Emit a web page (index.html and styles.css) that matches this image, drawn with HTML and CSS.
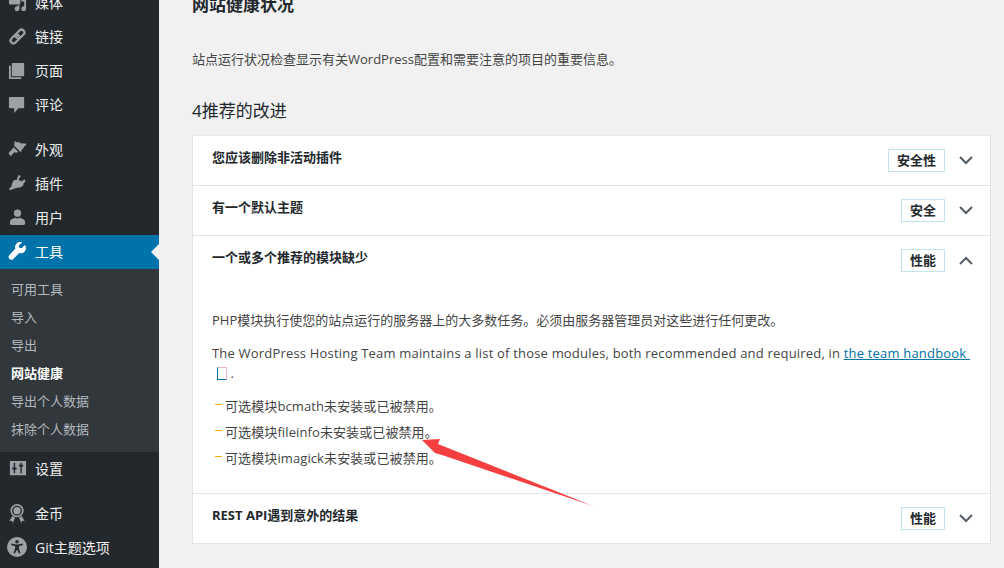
FILE: index.html

```html
<!DOCTYPE html>
<html lang="zh-CN">
<head>
    <meta charset="UTF-8">
    <title>网站健康状况</title>
    <link rel="stylesheet" href="styles.css">
</head>
<body>
    <div class="page">
        <!-- Admin menu -->
        <aside class="sidebar">
            <ul class="menu">
                <li class="menu-item"><svg class="menu-icon" viewBox="0 0 20 20"><path d="M13 11V4c0-.55-.45-1-1-1h-1.670L9 1H5L3.670 3H2c-.55 0-1 .45-1 1v7c0 .55.45 1 1 1h10c.55 0 1-.45 1-1zM14 6h5v10.500c0 1.380-1.120 2.500-2.500 2.500S14 17.880 14 16.500s1.120-2.500 2.500-2.500c.17 0 .34.020.5.050V9h-3V6zm-4 8.050V13h2v3.500c0 1.380-1.120 2.500-2.500 2.500S7 17.880 7 16.500 8.120 14 9.500 14c.17 0 .34.020.5.050z"/></svg>媒体</li>
                <li class="menu-item"><svg class="menu-icon menu-icon-line" viewBox="0 0 20 20"><rect x="1" y="7" width="10.500" height="6" rx="3" transform="rotate(-45 10 10)"/><rect x="8.500" y="7" width="10.500" height="6" rx="3" transform="rotate(-45 10 10)"/></svg>链接</li>
                <li class="menu-item"><svg class="menu-icon" viewBox="0 0 20 20"><path d="M4 2h13v14H4zM1 5h2v12h11v2H1z"/></svg>页面</li>
                <li class="menu-item"><svg class="menu-icon" viewBox="0 0 20 20"><path d="M2 2h14a1 1 0 0 1 1 1v10a1 1 0 0 1-1 1h-5l-4.500 5V14H2a1 1 0 0 1-1-1V3a1 1 0 0 1 1-1z"/></svg>评论</li>
                <li class="menu-sep"></li>
                <li class="menu-item"><svg class="menu-icon" viewBox="0 0 20 20"><path d="M7 1l3 1.500 2-.500 1 1.500L20 4l-3 3-1 2-1 .5-1.500 3.500-7-7zM6 7.500l5 5-2.500 1-2-.5-3.500 4-2.500-3 4-4.500z"/></svg>外观</li>
                <li class="menu-item"><svg class="menu-icon" viewBox="0 0 20 20"><path d="M11 1l2.500 1-2.500 4 3.500 2 2.700-2.500 1.300 2-2.500 3 .5 1-3 2.500-3.500.5-2 .5L2 17l-1-1.500 2.500-2 .5-2.500 1.500-4 2.500-1 1 .5z"/></svg>插件</li>
                <li class="menu-item"><svg class="menu-icon" viewBox="0 0 20 20"><circle cx="10" cy="5.500" r="3.800"/><path d="M2 17v-2.500C2 12.500 5 11 7.500 10.200c1.500 1 3.500 1 5 0C15 11 18 12.500 18 14.500V17c-2 1.300-14 1.300-16 0z"/></svg>用户</li>
                <li class="menu-item menu-item-active"><svg class="menu-icon" viewBox="0 0 20 20"><path d="M17.800 3.100l-3.500 3.400-2.400-.5-.5-2.400 3.400-3.400c-2-.7-4.300-.2-5.800 1.300-1.500 1.500-1.900 3.600-1.300 5.500L1.500 13.700c-1.200 1.200-1.200 3 0 4.100 1.200 1.200 3 1.200 4.100 0l6.200-6.200c1.900.7 4 .2 5.500-1.300 1.500-1.500 2-3.700 1.300-5.700z"/></svg>工具</li>
                <li class="submenu">
                    <a>可用工具</a>
                    <a>导入</a>
                    <a>导出</a>
                    <a class="submenu-current">网站健康</a>
                    <a>导出个人数据</a>
                    <a>抹除个人数据</a>
                </li>
                <li class="menu-item"><svg class="menu-icon" viewBox="0 0 20 20"><path fill-rule="evenodd" d="M2 2h17v15H2zM6 4v5H4.500v2H6v4h1.500v-4H9V9H7.500V4zM13 4v2h-1.500v2H13v7h1.500V8H16V6h-1.500V4z"/></svg>设置</li>
                <li class="menu-sep"></li>
                <li class="menu-item"><svg class="menu-icon" viewBox="0 0 20 20"><path fill-rule="evenodd" d="M9.500 0a7 7 0 1 1 0 14 7 7 0 0 1 0-14zM9.500 1.800a5.200 5.200 0 1 0 0 10.400 5.200 5.200 0 0 0 0-10.400zM9.500 3.200a3.800 3.800 0 1 1 0 7.600 3.800 3.800 0 0 1 0-7.600zM4.500 12.500l3 2-2.500 5.500-1-2.500-2.500.5zM14.500 12.500l-3 2 2.500 5.500 1-2.500 2.500.5z"/></svg>金币</li>
                <li class="menu-item"><svg class="menu-icon menu-icon-large" viewBox="0 0 20 20"><path fill-rule="evenodd" d="M10 0a10 10 0 1 1 0 20 10 10 0 0 1 0-20zM10 3a1.800 1.800 0 1 0 0 3.600A1.800 1.800 0 0 0 10 3zM4.500 6.500l-.4 1.400 4 1.300v2.300L6.500 16l1.400.5L10 12.500l2.100 4 1.400-.5-1.600-4.500V9.200l4-1.300-.4-1.400c-2 .6-3.600 1-5.500 1s-3.500-.4-5.500-1z"/></svg>Git主题选项</li>
            </ul>
        </aside>

        <!-- Site health -->
        <main class="content">
            <h1 class="page-title">网站健康状况</h1>
            <p class="intro">站点运行状况检查显示有关WordPress配置和需要注意的项目的重要信息。</p>
            <h2 class="section-title">4推荐的改进</h2>

            <div class="accordion">
                <div class="row">
                    <h3 class="row-title">您应该删除非活动插件</h3>
                    <span class="badge">安全性</span>
                    <svg class="chevron" viewBox="0 0 14 9"><path d="M1 1l6 6 6-6"/></svg>
                </div>
                <div class="row">
                    <h3 class="row-title">有一个默认主题</h3>
                    <span class="badge">安全</span>
                    <svg class="chevron" viewBox="0 0 14 9"><path d="M1 1l6 6 6-6"/></svg>
                </div>
                <div class="row">
                    <h3 class="row-title">一个或多个推荐的模块缺少</h3>
                    <span class="badge">性能</span>
                    <svg class="chevron" viewBox="0 0 14 9"><path d="M1 8l6-6 6 6"/></svg>
                </div>
                <div class="panel">
                    <p class="panel-intro">PHP模块执行使您的站点运行的服务器上的大多数任务。必须由服务器管理员对这些进行任何更改。</p>
                    <p class="panel-latin">The WordPress Hosting Team maintains a list of those modules, both recommended and required, in <a class="link" href="#">the team handbook&nbsp;</a><br><span class="tofu"></span> .</p>
                    <ul class="modules">
                        <li><span class="dash"></span>可选模块bcmath未安装或已被禁用。</li>
                        <li><span class="dash"></span>可选模块fileinfo未安装或已被禁用。</li>
                        <li><span class="dash"></span>可选模块imagick未安装或已被禁用。</li>
                    </ul>
                </div>
                <div class="row">
                    <h3 class="row-title">REST API遇到意外的结果</h3>
                    <span class="badge">性能</span>
                    <svg class="chevron" viewBox="0 0 14 9"><path d="M1 1l6 6 6-6"/></svg>
                </div>
            </div>
        </main>

        <!-- Red annotation arrow drawn over the screenshot -->
        <svg class="annotation" viewBox="0 0 1004 568"><path d="M422 440L440 439 438 444 593 506 442 455 435 453z"/></svg>
    </div>
</body>
</html>
```

FILE: styles.css

```css
* {
    margin: 0;
    padding: 0;
    box-sizing: border-box;
}

body {
    font-family: "Open Sans", "Noto Sans CJK SC", sans-serif;
    font-size: 13px;
    line-height: 1.5;
    color: #444;
    background: #f1f1f1;
}

.page {
    position: relative;
    display: flex;
    width: 1004px;
    height: 568px;
    overflow: hidden;
}

/* Sidebar */
.sidebar {
    flex: 0 0 159px;
    background: #23282d;
}

.menu {
    list-style: none;
    margin-top: -14px;
}

.menu-item {
    position: relative;
    display: flex;
    align-items: center;
    height: 34px;
    padding: 0 0 2px 8px;
    font-size: 14px;
    color: #eee;
}

.menu-icon {
    flex: 0 0 19px;
    width: 19px;
    height: 19px;
    margin-right: 8px;
    fill: #9ca1a6;
}

.menu-icon-line {
    fill: none;
    stroke: #9ca1a6;
    stroke-width: 2.400;
}

.menu-icon-large {
    flex-basis: 20px;
    width: 20px;
    height: 20px;
    margin-left: -1px;
}

.menu-sep {
    height: 11px;
}

.menu-item-active {
    background: #0073aa;
    color: #fff;
}

.menu-item-active .menu-icon {
    fill: #fff;
}

/* little notch pointing at the content */
.menu-item-active::after {
    content: "";
    position: absolute;
    right: 0;
    top: 9px;
    border: 8px solid transparent;
    border-left-width: 0;
    border-right-color: #f1f1f1;
}

.submenu {
    display: flex;
    flex-direction: column;
    padding: 7px 0 8px;
    background: #32373c;
}

.submenu a {
    height: 28px;
    padding-left: 11px;
    line-height: 27px;
    font-size: 13px;
    color: #b4b9be;
}

.submenu .submenu-current {
    font-weight: 700;
    color: #fff;
}

/* Content */
.content {
    flex: 1;
    padding: 0 13px 0 33px;
}

.page-title {
    margin-top: -7px;
    font-size: 17px;
    font-weight: 600;
    line-height: 24px;
    color: #23282d;
}

.intro {
    margin-top: 32px;
    line-height: 20px;
}

.section-title {
    margin-top: 29px;
    font-size: 17px;
    font-weight: 400;
    line-height: 26px;
    color: #23282d;
}

.accordion {
    margin-top: 11px;
    background: #fff;
    border: 1px solid #e2e4e7;
    border-top-color: #e8e9eb;
}

.row {
    display: flex;
    align-items: center;
    height: 50px;
    padding: 0 17px 0 19px;
    border-top: 1px solid #e2e4e7;
}

.row:first-child {
    height: 49px;
    border-top: 0;
}

.row-title {
    flex: 1;
    margin-top: -5px;
    font-size: 13px;
    font-weight: 700;
    color: #23282d;
}

.badge {
    height: 23px;
    padding: 0 8px;
    border: 1px solid #c0e3ee;
    font-size: 13px;
    font-weight: 600;
    line-height: 21px;
    color: #23282d;
}

.chevron {
    width: 14px;
    height: 9px;
    margin-left: 14px;
    fill: none;
    stroke: #555d66;
    stroke-width: 2;
}

.panel {
    padding: 25px 19px 22px;
    line-height: 20px;
}

.panel-intro {
    margin-bottom: 13px;
}

.panel-latin {
    letter-spacing: .19px;
}

.link {
    color: #0073aa;
    text-decoration: underline;
}

.tofu {
    display: inline-block;
    width: 10px;
    height: 13px;
    margin-left: 5px;
    vertical-align: -2px;
    border: 1px solid #0073aa;
    border-right-color: #e8b8c8;
    border-top-color: #e8b8c8;
}

.modules {
    list-style: none;
    margin-top: 10px;
    letter-spacing: .1px;
}

.modules li {
    display: flex;
    align-items: center;
    height: 26px;
}

.dash {
    width: 7px;
    height: 1px;
    margin: -4px 3px 0 3px;
    background: #fa0;
}

.annotation {
    position: absolute;
    left: 0;
    top: 0;
    width: 1004px;
    height: 568px;
    fill: #f33f3f;
    pointer-events: none;
}
```
